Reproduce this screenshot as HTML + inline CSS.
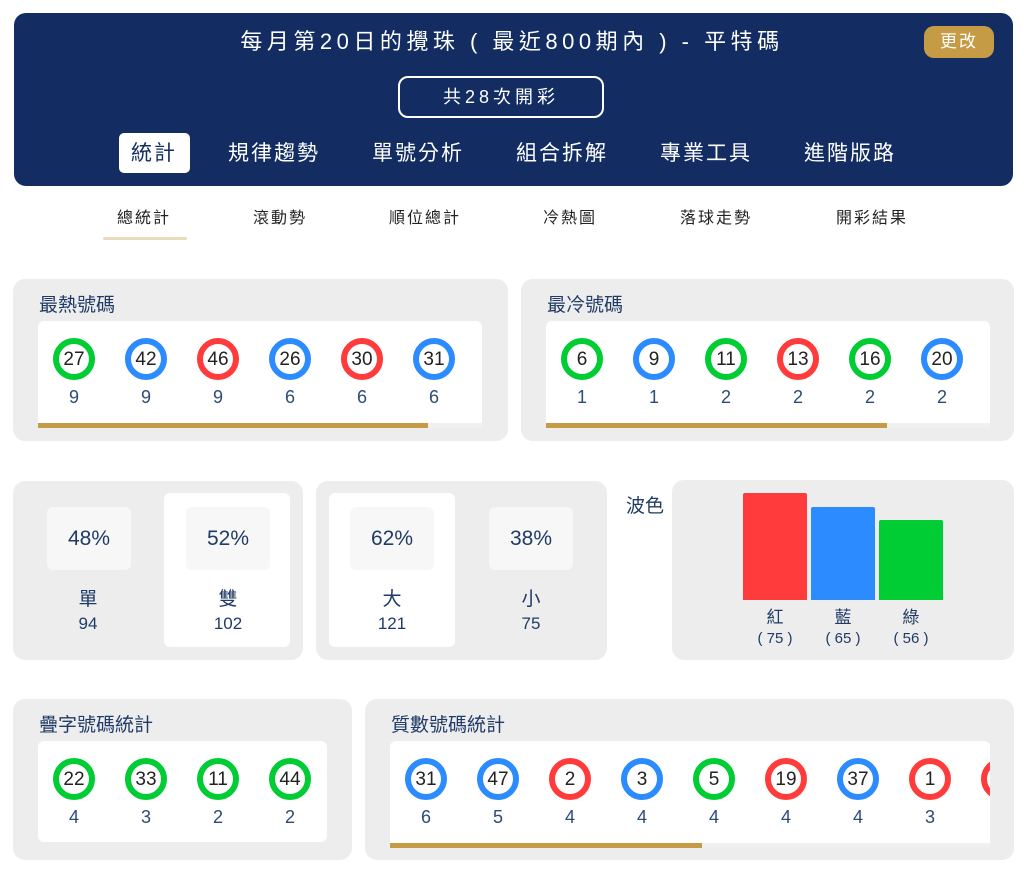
<!DOCTYPE html><html><head><meta charset="utf-8"><style>
*{margin:0;padding:0;box-sizing:border-box}
body{width:1024px;height:871px;background:#fff;position:relative;overflow:hidden;font-family:"Liberation Sans","Noto Sans CJK TC",sans-serif;color:#1f3b66}
.a{position:absolute}
.hdr{left:14px;top:13px;width:999px;height:173px;background:#132d62;border-radius:12px}
.ttl{left:0;width:1024px;top:29px;text-align:center;color:#fff;font-size:22px;letter-spacing:4.5px;line-height:26px}
.btn{left:924px;top:26px;width:70px;height:32px;background:#c59b45;border-radius:10px;color:#fff;font-size:17px;text-align:center;line-height:32px;letter-spacing:2px}
.cnt{left:398px;top:76px;width:206px;height:42px;border:2px solid #fff;border-radius:10px;color:#fff;font-size:18px;text-align:center;line-height:38px;letter-spacing:4px}
.tab{top:141px;width:140px;margin-left:-70px;text-align:center;color:#fff;font-size:21px;line-height:26px;letter-spacing:2px}
.tabw{left:119px;top:133px;width:71px;height:40px;background:#fff;border-radius:5px}
.sub{top:209px;width:120px;margin-left:-60px;text-align:center;color:#222;font-size:16px;line-height:20px;letter-spacing:2px}
.card{background:#ededed;border-radius:12px}
.white{background:#fff;border-radius:6px}
.ct{font-size:19px;line-height:22px;color:#1f3b66}
.ball{width:42px;height:42px;margin-left:-21px;border-radius:50%;border:6px solid;background:#fff;color:#222;font-size:19px;text-align:center;line-height:31px}
.r{border-color:#ff3b3b}.b{border-color:#2b8bff}.g{border-color:#00cc33}
.n{width:40px;margin-left:-20px;text-align:center;font-size:18px;line-height:20px;color:#2b4a7a}
.pb{background:#f7f7f7;border-radius:6px;font-size:21px;text-align:center;line-height:63px;color:#1f3b66}
.lb{width:80px;margin-left:-40px;text-align:center;font-size:19px;line-height:22px}
.lv{width:80px;margin-left:-40px;text-align:center;font-size:17px;line-height:20px}
</style></head><body>
<div class="a hdr"></div>
<div class="a ttl">每月第20日的攪珠 ( 最近800期內 ) - 平特碼</div>
<div class="a btn">更改</div>
<div class="a cnt">共28次開彩</div>
<div class="a tabw"></div>
<div class="a tab" style="left:154px;color:#132d62">統計</div>
<div class="a tab" style="left:274px">規律趨勢</div>
<div class="a tab" style="left:418px">單號分析</div>
<div class="a tab" style="left:562px">組合拆解</div>
<div class="a tab" style="left:706px">專業工具</div>
<div class="a tab" style="left:850px">進階版路</div>

<div class="a sub" style="left:144px">總統計</div>
<div class="a sub" style="left:280px">滾動勢</div>
<div class="a sub" style="left:425px">順位總計</div>
<div class="a sub" style="left:570px">冷熱圖</div>
<div class="a sub" style="left:716px">落球走勢</div>
<div class="a sub" style="left:872px">開彩結果</div>
<div class="a" style="left:103px;top:237px;width:84px;height:3px;background:#e8dcbc;border-radius:2px"></div>

<!-- hot -->
<div class="a card" style="left:13px;top:279px;width:495px;height:162px"></div>
<div class="a ct" style="left:39px;top:295px">最熱號碼</div>
<div class="a white" style="left:38px;top:321px;width:444px;height:107px;border-radius:6px 6px 0 0"></div>
<div class="a" style="left:38px;top:423px;width:444px;height:5px;background:#f0f0f0"></div>
<div class="a" style="left:38px;top:423px;width:390px;height:5px;background:#c59b45"></div>
<div class="a ball g" style="left:74px;top:338px">27</div><div class="a n" style="left:74px;top:387px">9</div>
<div class="a ball b" style="left:146px;top:338px">42</div><div class="a n" style="left:146px;top:387px">9</div>
<div class="a ball r" style="left:218px;top:338px">46</div><div class="a n" style="left:218px;top:387px">9</div>
<div class="a ball b" style="left:290px;top:338px">26</div><div class="a n" style="left:290px;top:387px">6</div>
<div class="a ball r" style="left:362px;top:338px">30</div><div class="a n" style="left:362px;top:387px">6</div>
<div class="a ball b" style="left:434px;top:338px">31</div><div class="a n" style="left:434px;top:387px">6</div>

<!-- cold -->
<div class="a card" style="left:521px;top:279px;width:493px;height:162px"></div>
<div class="a ct" style="left:547px;top:295px">最冷號碼</div>
<div class="a white" style="left:546px;top:321px;width:444px;height:107px;border-radius:6px 6px 0 0"></div>
<div class="a" style="left:546px;top:423px;width:444px;height:5px;background:#f0f0f0"></div>
<div class="a" style="left:546px;top:423px;width:341px;height:5px;background:#c59b45"></div>
<div class="a ball g" style="left:582px;top:338px">6</div><div class="a n" style="left:582px;top:387px">1</div>
<div class="a ball b" style="left:654px;top:338px">9</div><div class="a n" style="left:654px;top:387px">1</div>
<div class="a ball g" style="left:726px;top:338px">11</div><div class="a n" style="left:726px;top:387px">2</div>
<div class="a ball r" style="left:798px;top:338px">13</div><div class="a n" style="left:798px;top:387px">2</div>
<div class="a ball g" style="left:870px;top:338px">16</div><div class="a n" style="left:870px;top:387px">2</div>
<div class="a ball b" style="left:942px;top:338px">20</div><div class="a n" style="left:942px;top:387px">2</div>

<!-- odd/even -->
<div class="a card" style="left:13px;top:481px;width:290px;height:179px"></div>
<div class="a white" style="left:164px;top:493px;width:126px;height:154px"></div>
<div class="a pb" style="left:47px;top:507px;width:84px;height:63px">48%</div>
<div class="a pb" style="left:186px;top:507px;width:84px;height:63px">52%</div>
<div class="a lb" style="left:88px;top:589px">單</div><div class="a lv" style="left:88px;top:614px">94</div>
<div class="a lb" style="left:228px;top:589px">雙</div><div class="a lv" style="left:228px;top:614px">102</div>

<div class="a card" style="left:316px;top:481px;width:291px;height:179px"></div>
<div class="a white" style="left:329px;top:493px;width:126px;height:154px"></div>
<div class="a pb" style="left:350px;top:507px;width:84px;height:63px">62%</div>
<div class="a pb" style="left:489px;top:507px;width:84px;height:63px">38%</div>
<div class="a lb" style="left:392px;top:589px">大</div><div class="a lv" style="left:392px;top:614px">121</div>
<div class="a lb" style="left:531px;top:589px">小</div><div class="a lv" style="left:531px;top:614px">75</div>

<div class="a ct" style="left:626px;top:496px">波色</div>
<div class="a card" style="left:672px;top:480px;width:342px;height:180px"></div>
<div class="a" style="left:743px;top:493px;width:64px;height:107px;background:#ff3b3b;border-radius:2px 2px 0 0"></div>
<div class="a" style="left:811px;top:507px;width:64px;height:93px;background:#2b8bff;border-radius:2px 2px 0 0"></div>
<div class="a" style="left:879px;top:520px;width:64px;height:80px;background:#00cc33;border-radius:2px 2px 0 0"></div>
<div class="a lv" style="left:775px;top:608px">紅</div><div class="a lv" style="left:775px;top:629px;font-size:15px">( 75 )</div>
<div class="a lv" style="left:843px;top:608px">藍</div><div class="a lv" style="left:843px;top:629px;font-size:15px">( 65 )</div>
<div class="a lv" style="left:911px;top:608px">綠</div><div class="a lv" style="left:911px;top:629px;font-size:15px">( 56 )</div>

<!-- repeat -->
<div class="a card" style="left:13px;top:699px;width:339px;height:161px"></div>
<div class="a ct" style="left:39px;top:715px">疊字號碼統計</div>
<div class="a white" style="left:38px;top:741px;width:289px;height:101px"></div>
<div class="a ball g" style="left:74px;top:758px">22</div><div class="a n" style="left:74px;top:807px">4</div>
<div class="a ball g" style="left:146px;top:758px">33</div><div class="a n" style="left:146px;top:807px">3</div>
<div class="a ball g" style="left:218px;top:758px">11</div><div class="a n" style="left:218px;top:807px">2</div>
<div class="a ball g" style="left:290px;top:758px">44</div><div class="a n" style="left:290px;top:807px">2</div>

<!-- prime -->
<div class="a card" style="left:365px;top:699px;width:649px;height:161px"></div>
<div class="a ct" style="left:391px;top:715px">質數號碼統計</div>
<div class="a" style="left:390px;top:741px;width:600px;height:107px;overflow:hidden;background:#fff;border-radius:6px 6px 0 0">
<div class="a" style="left:0;top:102px;width:600px;height:5px;background:#f0f0f0"></div>
<div class="a" style="left:0;top:102px;width:312px;height:5px;background:#c59b45"></div>
<div class="a ball b" style="left:36px;top:17px">31</div><div class="a n" style="left:36px;top:66px">6</div>
<div class="a ball b" style="left:108px;top:17px">47</div><div class="a n" style="left:108px;top:66px">5</div>
<div class="a ball r" style="left:180px;top:17px">2</div><div class="a n" style="left:180px;top:66px">4</div>
<div class="a ball b" style="left:252px;top:17px">3</div><div class="a n" style="left:252px;top:66px">4</div>
<div class="a ball g" style="left:324px;top:17px">5</div><div class="a n" style="left:324px;top:66px">4</div>
<div class="a ball r" style="left:396px;top:17px">19</div><div class="a n" style="left:396px;top:66px">4</div>
<div class="a ball b" style="left:468px;top:17px">37</div><div class="a n" style="left:468px;top:66px">4</div>
<div class="a ball r" style="left:540px;top:17px">1</div><div class="a n" style="left:540px;top:66px">3</div>
<div class="a ball r" style="left:612px;top:17px">7</div>
</div>
</body></html>
